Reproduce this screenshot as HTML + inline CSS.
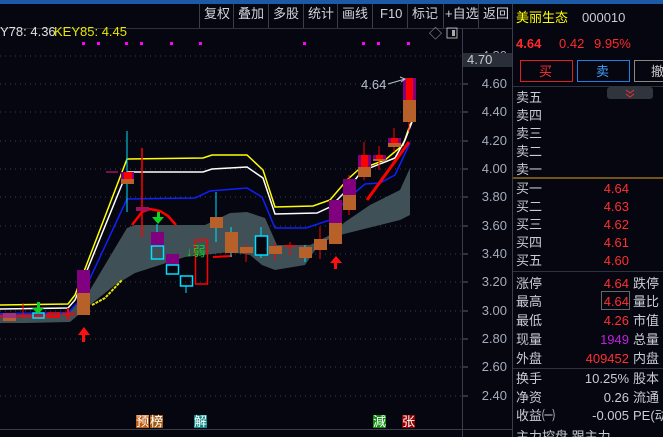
<!DOCTYPE html>
<html><head><meta charset="utf-8"><style>
html,body{margin:0;padding:0;background:#05060f;width:663px;height:437px;overflow:hidden}
svg{display:block}
text{font-family:"Liberation Sans","Noto Sans CJK SC",sans-serif;font-size:13px}
</style></head><body>
<svg width="663" height="437" viewBox="0 0 663 437" xmlns="http://www.w3.org/2000/svg">
<rect width="663" height="437" fill="#05060f"/>
<rect x="0" y="0" width="663" height="4" fill="#1c5aa8"/>
<!-- toolbar -->
<line x1="0" y1="28.5" x2="512" y2="28.5" stroke="#2e323c"/>
<g stroke="#3a3e48">
<line x1="199.5" y1="4" x2="199.5" y2="28"/><line x1="233.5" y1="4" x2="233.5" y2="28"/><line x1="268.5" y1="4" x2="268.5" y2="28"/><line x1="303.5" y1="4" x2="303.5" y2="28"/><line x1="337.5" y1="4" x2="337.5" y2="28"/><line x1="372.5" y1="4" x2="372.5" y2="28"/><line x1="407.5" y1="4" x2="407.5" y2="28"/><line x1="443.5" y1="4" x2="443.5" y2="28"/><line x1="478.5" y1="4" x2="478.5" y2="28"/><line x1="512.5" y1="4" x2="512.5" y2="437"/>
</g>
<g fill="#d0d4dc">
<text x="204" y="18">复权</text><text x="238" y="18">叠加</text><text x="273" y="18">多股</text><text x="308" y="18">统计</text><text x="342" y="18">画线</text><text x="380" y="18">F10</text><text x="412" y="18">标记</text><text x="445" y="18" font-size="12">+自选</text><text x="483" y="18">返回</text>
</g>
<!-- header -->
<text x="0" y="36" fill="#e0e0e0" font-size="12">Y78: 4.36</text>
<text x="54" y="36" fill="#e6e600" font-size="12">KEY85: 4.45</text>
<text x="429" y="38" fill="#aaa" font-size="12">◇</text>
<rect x="447" y="28" width="10" height="10" fill="none" stroke="#aaa"/><rect x="452" y="30" width="3" height="6" fill="#aaa"/>
<g fill="#ff00ff">
<rect x="82" y="42" width="3" height="3"/><rect x="97" y="42" width="3" height="3"/><rect x="125" y="42" width="3" height="3"/><rect x="140" y="42" width="3" height="3"/><rect x="170" y="42" width="3" height="3"/><rect x="199" y="42" width="3" height="3"/><rect x="303" y="42" width="3" height="3"/><rect x="362" y="42" width="3" height="3"/><rect x="377" y="42" width="3" height="3"/><rect x="407" y="42" width="3" height="3"/>
</g>
<!-- grid -->
<g stroke="#3a3f4c" stroke-dasharray="1,4">
<line x1="0" y1="56" x2="462" y2="56"/><line x1="0" y1="84" x2="462" y2="84"/><line x1="0" y1="112" x2="462" y2="112"/><line x1="0" y1="141" x2="462" y2="141"/><line x1="0" y1="169" x2="462" y2="169"/><line x1="0" y1="197" x2="462" y2="197"/><line x1="0" y1="226" x2="462" y2="226"/><line x1="0" y1="254" x2="462" y2="254"/><line x1="0" y1="282" x2="462" y2="282"/><line x1="0" y1="311" x2="462" y2="311"/><line x1="0" y1="339" x2="462" y2="339"/><line x1="0" y1="367" x2="462" y2="367"/><line x1="0" y1="396" x2="462" y2="396"/>
</g>
<line x1="462.5" y1="28" x2="462.5" y2="437" stroke="#3a3e48"/>
<line x1="0" y1="429.5" x2="512" y2="429.5" stroke="#3a3e48"/>
<!-- axis -->
<g fill="#a4acbc" font-size="12" text-anchor="end">
<text x="507" y="60">4.80</text><text x="507" y="88">4.60</text><text x="507" y="116">4.40</text><text x="507" y="145">4.20</text><text x="507" y="173">4.00</text><text x="507" y="201">3.80</text><text x="507" y="230">3.60</text><text x="507" y="258">3.40</text><text x="507" y="286">3.20</text><text x="507" y="315">3.00</text><text x="507" y="343">2.80</text><text x="507" y="371">2.60</text><text x="507" y="400">2.40</text>
</g>
<g stroke="#5a606c"><line x1="463" y1="84" x2="468" y2="84"/><line x1="463" y1="112" x2="468" y2="112"/><line x1="463" y1="141" x2="468" y2="141"/><line x1="463" y1="169" x2="468" y2="169"/><line x1="463" y1="197" x2="468" y2="197"/><line x1="463" y1="226" x2="468" y2="226"/><line x1="463" y1="254" x2="468" y2="254"/><line x1="463" y1="282" x2="468" y2="282"/><line x1="463" y1="311" x2="468" y2="311"/><line x1="463" y1="339" x2="468" y2="339"/><line x1="463" y1="367" x2="468" y2="367"/><line x1="463" y1="396" x2="468" y2="396"/></g>
<rect x="463" y="53" width="49" height="14" fill="#2a2e38"/>
<text x="467" y="64" fill="#c8ccd4" font-size="12">4.70</text>
<!-- band -->
<polygon fill="#3f5156" points="0,313 70,312 90,290 127,228 135,225 205,225 230,213 247,212 265,218 277,245 310,245 330,235 345,222 370,205 380,200 400,190 410,168 410,215 400,220 380,225 360,230 340,235 320,243 305,265 275,270 262,265 250,255 230,252 203,255 185,257 135,273 115,285 90,305 70,322 25,323 0,323"/>
<polyline fill="none" stroke="#e6e600" stroke-width="2" stroke-dasharray="3,1" points="92,305 105,298 122,280"/>
<!-- lines -->
<polyline fill="none" stroke="#ffff00" stroke-width="1.5" points="0,305 68,304 75,295 127,159 203,158 212,155 247,155 263,170 275,207 313,206 330,200 347,180 358,170 385,160 403,145 410,125 413,120"/>
<polyline fill="none" stroke="#ffffff" stroke-width="1.5" points="0,309 68,308 75,300 127,172 203,172 212,169 247,167 263,178 275,214 317,213 330,207 347,190 362,171 395,158 405,140 412,122"/>
<polyline fill="none" stroke="#1020ff" stroke-width="1.5" points="0,314 68,313 80,300 127,199 195,198 210,191 247,188 262,197 275,228 306,228 330,220 345,201 365,184 380,183 395,175 410,143"/>
<polyline fill="none" stroke="#ff0000" stroke-width="3" points="367,200 409,142"/>
<polyline fill="none" stroke="#ff0000" stroke-width="2" points="0,316 60,316"/>
<polyline fill="none" stroke="#ff0000" stroke-width="2" points="213,257 232,256"/>
<polyline fill="none" stroke="#ff0000" stroke-width="2.5" points="132,225 142,212 150,209 160,211 168,216 176,225"/>
<!-- candles -->
<g>
<rect x="3" y="313" width="13" height="5" fill="#a03080"/><rect x="3" y="318" width="13" height="3" fill="#b8602a"/>
<line x1="23" y1="303" x2="23" y2="318" stroke="#f00"/>
<rect x="33" y="313" width="11" height="5" fill="none" stroke="#00e0ff" stroke-width="1.5"/>
<rect x="48" y="313" width="11" height="4" fill="none" stroke="#f00" stroke-width="1.5"/>
<line x1="62" y1="314" x2="75" y2="314" stroke="#f00" stroke-width="2"/><line x1="68" y1="308" x2="68" y2="320" stroke="#f00" stroke-width="2"/>
<rect x="77" y="270" width="13" height="23" fill="#800080"/><rect x="77" y="293" width="13" height="22" fill="#b8602a"/>
<line x1="127" y1="131" x2="127" y2="212" stroke="#00e0ff"/>
<rect x="121" y="172" width="13" height="7" fill="#800080"/><rect x="124" y="172" width="8" height="7" fill="#f00"/><rect x="121" y="179" width="13" height="5" fill="#b8602a"/>
<line x1="106" y1="172" x2="118" y2="172" stroke="#a01060" stroke-width="1.5"/>
<line x1="142" y1="148" x2="142" y2="237" stroke="#f00" stroke-width="1.5"/>
<rect x="136" y="207" width="13" height="4" fill="#a01060"/>
<line x1="157" y1="224" x2="157" y2="232" stroke="#00e0ff"/>
<rect x="151" y="232" width="13" height="14" fill="#800080"/><rect x="151.5" y="246" width="12" height="13" fill="none" stroke="#00e0ff" stroke-width="1.5"/>
<rect x="166" y="254" width="13" height="11" fill="#800080"/><rect x="166.5" y="265" width="12" height="9" fill="none" stroke="#00e0ff" stroke-width="1.5"/>
<line x1="186" y1="286" x2="186" y2="293" stroke="#00e0ff"/>
<rect x="180.5" y="276" width="12" height="10" fill="none" stroke="#00e0ff" stroke-width="1.5"/>
<rect x="195.5" y="240" width="12" height="44" fill="none" stroke="#f00" stroke-width="1.5"/>
<line x1="216" y1="192" x2="216" y2="242" stroke="#00e0ff"/>
<rect x="210" y="217" width="13" height="11" fill="#b8602a"/>
<line x1="231" y1="227" x2="231" y2="257" stroke="#00e0ff"/>
<rect x="225" y="232" width="13" height="21" fill="#b8602a"/>
<line x1="246" y1="244" x2="246" y2="262" stroke="#f00"/><rect x="240" y="247" width="13" height="6" fill="#b8602a"/>
<line x1="261" y1="227" x2="261" y2="258" stroke="#00e0ff"/><rect x="255.5" y="236" width="12" height="19" fill="#05060f" stroke="#00e0ff" stroke-width="1.5"/>
<line x1="275" y1="243" x2="275" y2="260" stroke="#f00"/><rect x="269" y="246" width="13" height="8" fill="#b8602a"/>
<line x1="290" y1="242" x2="290" y2="256" stroke="#f00"/><line x1="284" y1="246" x2="296" y2="246" stroke="#f00" stroke-width="1.5"/>
<line x1="305" y1="245" x2="305" y2="262" stroke="#00e0ff"/><rect x="299" y="247" width="13" height="11" fill="#b8602a"/>
<line x1="320" y1="227" x2="320" y2="259" stroke="#f00"/><rect x="314" y="239" width="13" height="11" fill="#b8602a"/>
<rect x="329" y="200" width="13" height="23" fill="#800080"/><rect x="329" y="223" width="13" height="21" fill="#b8602a"/>
<line x1="349" y1="175" x2="349" y2="215" stroke="#f00"/>
<rect x="343" y="179" width="13" height="16" fill="#800080"/><rect x="343" y="195" width="13" height="15" fill="#b8602a"/>
<line x1="364" y1="142" x2="364" y2="180" stroke="#f00"/>
<rect x="358" y="155" width="13" height="12" fill="#800080"/><rect x="361" y="155" width="7" height="12" fill="#f00"/><rect x="358" y="167" width="13" height="10" fill="#b8602a"/>
<line x1="379" y1="146" x2="379" y2="170" stroke="#f00"/>
<rect x="373" y="155" width="13" height="5" fill="#800080"/><rect x="376" y="155" width="7" height="4" fill="#f00"/><rect x="373" y="159" width="13" height="2" fill="#b8602a"/>
<line x1="394" y1="128" x2="394" y2="152" stroke="#f00"/>
<rect x="388" y="138" width="13" height="5" fill="#800080"/><rect x="391" y="138" width="7" height="5" fill="#f00"/><rect x="388" y="143" width="13" height="4" fill="#b8602a"/>
<line x1="409" y1="122" x2="409" y2="132" stroke="#f00"/>
<rect x="403" y="78" width="13" height="22" fill="#800080"/><rect x="406" y="78" width="7" height="22" fill="#f00"/><rect x="403" y="100" width="13" height="22" fill="#b8602a"/>
</g>
<!-- arrows -->
<g fill="#10d020"><rect x="37" y="302" width="3" height="6"/><polygon points="32,308 44,308 38,314"/>
<rect x="157" y="212" width="3" height="6"/><polygon points="152,217 164,217 158,224"/></g>
<g fill="#ff1010"><polygon points="78,335 90,335 84,327"/><rect x="82" y="335" width="3" height="7"/>
<polygon points="330,263 342,263 336,256"/><rect x="334" y="263" width="3" height="6"/></g>
<text x="186" y="256" fill="#10d020" font-size="12">↓弱</text>
<text x="361" y="89" fill="#b8c0d0" font-size="13">4.64</text>
<line x1="388" y1="84" x2="405" y2="79" stroke="#b8c0d0"/><polyline points="400,77 405,79 401,82" fill="none" stroke="#b8c0d0"/>
<!-- bottom labels -->
<rect x="136" y="415" width="13" height="13" fill="#c05a10"/><rect x="150" y="415" width="13" height="13" fill="#a05a10"/>
<rect x="194" y="415" width="13" height="13" fill="#108888"/><rect x="373" y="415" width="13" height="13" fill="#108a10"/><rect x="402" y="415" width="13" height="13" fill="#900000"/>
<g fill="#fff" font-size="12"><text x="136" y="426">预</text><text x="150" y="426">榜</text><text x="194" y="426">解</text><text x="373" y="426">減</text><text x="402" y="426">张</text></g>
<!-- right panel -->
<text x="516" y="22" fill="#ffff00" font-size="14">美丽生态</text>
<text x="582" y="22" fill="#c8ccd4" font-size="14">000010</text>
<text x="516" y="48" fill="#ff2a2a" font-size="17" font-weight="bold">4.64</text>
<text x="559" y="48" fill="#ff2a2a" font-size="14">0.42</text>
<text x="594" y="48" fill="#ff2a2a" font-size="14">9.95%</text>
<rect x="520.5" y="60.5" width="52" height="21" fill="none" stroke="#e02020"/><text x="539" y="76" fill="#ff3030">买</text>
<rect x="577.5" y="60.5" width="52" height="21" fill="none" stroke="#2080e0"/><text x="596" y="76" fill="#40a0ff">卖</text>
<rect x="634.5" y="60.5" width="40" height="21" fill="none" stroke="#888"/><text x="651" y="76" fill="#ccc">撤</text>
<line x1="513" y1="86.5" x2="663" y2="86.5" stroke="#2e323c"/>
<rect x="607" y="87" width="46" height="12" rx="3" fill="#30343c"/>
<polyline points="626,90 630,93 634,90" fill="none" stroke="#f03030"/><polyline points="626,94 630,97 634,94" fill="none" stroke="#f03030"/>
<g fill="#c8ccd4">
<text x="516" y="102">卖五</text><text x="516" y="120">卖四</text><text x="516" y="138">卖三</text><text x="516" y="156">卖二</text><text x="516" y="174">卖一</text>
<text x="516" y="193">买一</text><text x="516" y="211">买二</text><text x="516" y="229">买三</text><text x="516" y="247">买四</text><text x="516" y="265">买五</text>
</g>
<line x1="513" y1="178" x2="663" y2="178" stroke="#e0a020"/>
<g fill="#ff3030" text-anchor="end"><text x="629" y="193">4.64</text><text x="629" y="211">4.63</text><text x="629" y="229">4.62</text><text x="629" y="247">4.61</text><text x="629" y="265">4.60</text></g>
<line x1="513" y1="271.5" x2="663" y2="271.5" stroke="#2e323c"/>
<g fill="#c8ccd4"><text x="516" y="288">涨停</text><text x="516" y="306">最高</text><text x="516" y="325">最低</text><text x="516" y="344">现量</text><text x="516" y="363">外盘</text>
<text x="633" y="288">跌停</text><text x="633" y="306">量比</text><text x="633" y="325">市值</text><text x="633" y="344">总量</text><text x="633" y="363">内盘</text></g>
<rect x="601.5" y="291.5" width="28" height="18" fill="none" stroke="#666"/>
<g text-anchor="end" fill="#ff3030"><text x="629" y="288">4.64</text><text x="629" y="306">4.64</text><text x="629" y="325">4.26</text><text x="629" y="344" fill="#c020e0">1949</text><text x="629" y="363">409452</text></g>
<line x1="513" y1="368.5" x2="663" y2="368.5" stroke="#2e323c"/>
<g fill="#c8ccd4"><text x="516" y="383">换手</text><text x="516" y="402">净资</text><text x="516" y="420">收益㈠</text>
<text x="629" y="383" text-anchor="end">10.25%</text><text x="629" y="402" text-anchor="end">0.26</text><text x="629" y="420" text-anchor="end">-0.005</text>
<text x="633" y="383">股本</text><text x="633" y="402">流通</text><text x="633" y="420">PE(动</text>
<text x="516" y="441">主力控盘 跟主力</text></g>
</svg>
</body></html>
